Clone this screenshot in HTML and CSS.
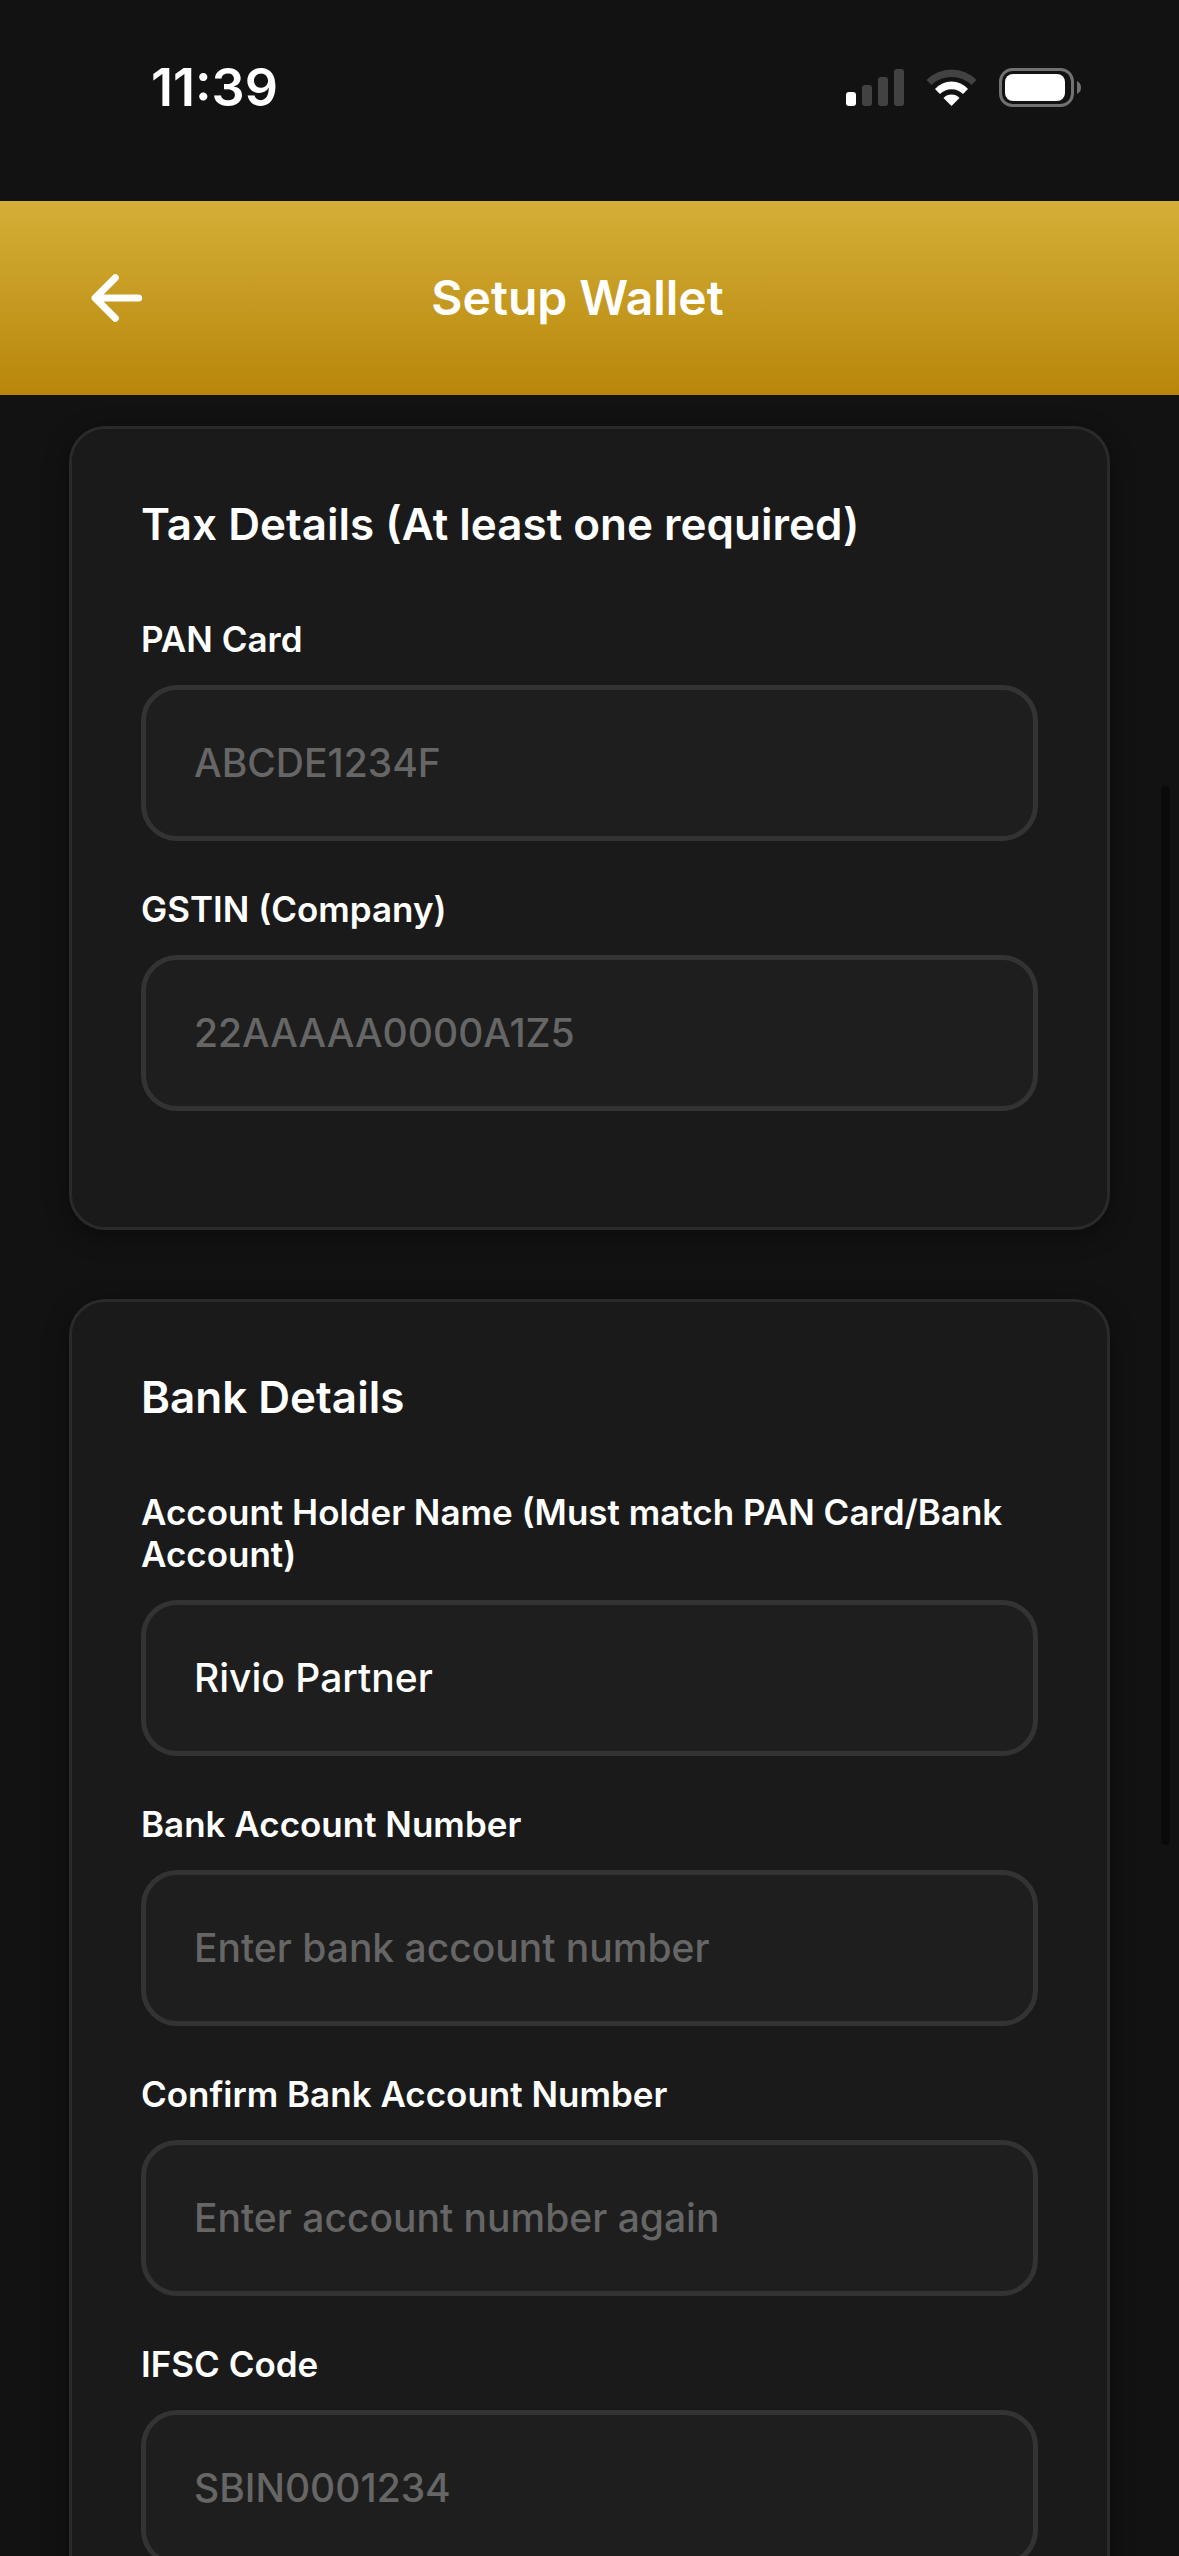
FILE: index.html
```html
<!DOCTYPE html>
<html lang="en">
<head>
  <meta charset="utf-8">
  <meta name="viewport" content="width=device-width, initial-scale=1">
  <title>Setup Wallet</title>
  <link rel="stylesheet" href="styles.css">
</head>
<body>
  <div class="app">
    <div class="status-bar">
      <time class="status-time">11:39</time>
      <svg class="status-icons" viewBox="0 0 236 40" role="img" aria-label="Signal, Wi-Fi and battery">
        <g fill="#424242">
          <rect x="16" y="17" width="10" height="21" rx="3"/>
          <rect x="32" y="9" width="10" height="29" rx="3"/>
          <rect x="48" y="1" width="10" height="37" rx="3"/>
          <path d="M80.500 12A35 35 0 0 1 130.500 12L125.500 17A29 29 0 0 0 85.500 17Z"/>
        </g>
        <g fill="#fff">
          <rect x="0" y="24" width="10" height="14" rx="3"/>
          <path d="M89 21A22 22 0 0 1 122 21L117 26A16.500 16.500 0 0 0 94 26Z"/>
          <path d="M97.500 30A11 11 0 0 1 113.500 30L105.500 38Z"/>
          <rect x="159" y="6" width="60" height="27" rx="8"/>
        </g>
        <rect x="154.500" y="1.500" width="72" height="36" rx="12" fill="none" stroke="#717171" stroke-width="3"/>
        <path d="M231 13Q235 15 235 19.500Q235 24 231 26Z" fill="#717171"/>
      </svg>
    </div>

    <header class="header">
      <button class="back" type="button" aria-label="Back">
        <svg class="back-icon" viewBox="0 0 512 512" fill="none" stroke="#fff" stroke-width="50" stroke-linecap="round" stroke-linejoin="round">
          <path d="M244 400L100 256l144-144M120 256h290"/>
        </svg>
      </button>
      <h1 class="title">Setup Wallet</h1>
      <span class="header-spacer"></span>
    </header>

    <main class="content">
      <section class="card">
        <h2 class="card-title">Tax Details (At least one required)</h2>
        <div class="field">
          <label class="label" for="pan">PAN Card</label>
          <input class="input" id="pan" type="text" placeholder="ABCDE1234F">
        </div>
        <div class="field">
          <label class="label" for="gstin">GSTIN (Company)</label>
          <input class="input" id="gstin" type="text" placeholder="22AAAAA0000A1Z5">
        </div>
      </section>

      <section class="card">
        <h2 class="card-title">Bank Details</h2>
        <div class="field">
          <label class="label" for="holder">Account Holder Name (Must match PAN Card/Bank Account)</label>
          <input class="input" id="holder" type="text" value="Rivio Partner">
        </div>
        <div class="field">
          <label class="label" for="account">Bank Account Number</label>
          <input class="input" id="account" type="text" placeholder="Enter bank account number">
        </div>
        <div class="field">
          <label class="label" for="confirm">Confirm Bank Account Number</label>
          <input class="input" id="confirm" type="text" placeholder="Enter account number again">
        </div>
        <div class="field">
          <label class="label" for="ifsc">IFSC Code</label>
          <input class="input" id="ifsc" type="text" placeholder="SBIN0001234">
        </div>
      </section>
    </main>
    <div class="scroll-thumb"></div>
  </div>
</body>
</html>
```
FILE: styles.css
```css
* {
  box-sizing: border-box;
}

body {
  margin: 0;
  background: #121212;
  color: #fff;
  font-family: Inter, "Liberation Sans", sans-serif;
}

.app {
  position: relative;
  display: flex;
  flex-direction: column;
  height: 100vh;
  overflow: hidden;
}

.status-bar {
  flex: none;
  display: flex;
  justify-content: space-between;
  align-items: center;
  padding: 58px 97px 83px 151px;
}

.status-time {
  font-size: 52px;
  font-weight: 600;
  line-height: 60px;
}

.status-icons {
  width: 236px;
  height: 40px;
}

.header {
  flex: none;
  display: flex;
  align-items: center;
  padding: 49px 69px;
  background: linear-gradient(#d4af37, #b8860b);
}

.back {
  display: flex;
  padding: 12px;
  border: 0;
  background: none;
}

.back-icon {
  width: 72px;
  height: 72px;
}

.title {
  flex: 1;
  margin: 0;
  font-size: 48px;
  font-weight: 600;
  line-height: 58px;
  text-align: center;
}

.header-spacer {
  width: 120px;
}

.content {
  flex: 1;
  min-height: 0;
  display: flex;
  flex-direction: column;
  gap: 69px;
  padding: 31px 69px;
  overflow-y: auto;
  scrollbar-width: none;
}

.card {
  flex: none;
  padding: 69px;
  border: 3px solid #2a2a2a;
  border-radius: 36px;
  background: #1a1a1a;
  box-shadow: 0 6px 24px rgba(0, 0, 0, 0.4);
}

.card-title {
  margin: 0 0 68px;
  font-size: 44px;
  font-weight: 600;
  line-height: 52px;
}

.field {
  display: flex;
  flex-direction: column;
  gap: 25px;
  margin-bottom: 47px;
}

.label {
  font-size: 35px;
  font-weight: 600;
  line-height: 42px;
}

.input {
  width: 100%;
  height: 156px;
  padding: 0 48px 2px;
  border: 5px solid #333;
  border-radius: 36px;
  background: #1e1e1e;
  color: #fff;
  font-family: inherit;
  font-size: 39px;
  font-weight: 500;
}

.input::placeholder {
  color: #666;
  opacity: 1;
}

.scroll-thumb {
  position: absolute;
  top: 786px;
  right: 9px;
  width: 9px;
  height: 1059px;
  border-radius: 5px;
  background: #0a0a0a;
}
```
